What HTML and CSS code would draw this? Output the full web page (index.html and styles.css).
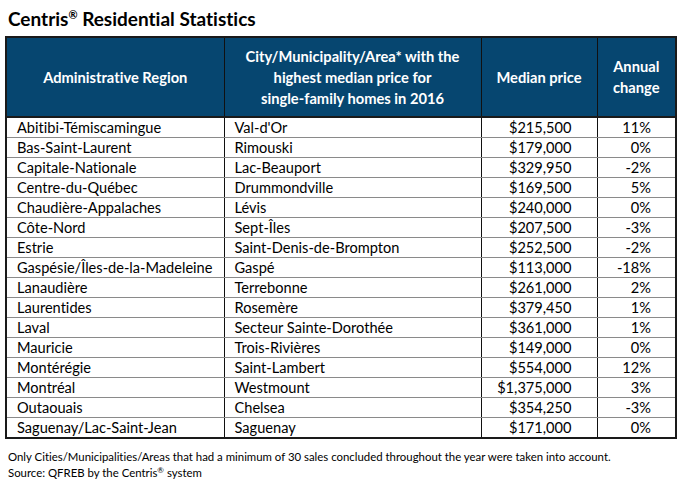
FILE: index.html
```html
<!DOCTYPE html>
<html>
<head>
<meta charset="utf-8">
<link rel="stylesheet" href="styles.css">
</head>
<body>
<div class="page">
  <h1 class="title">Centris<sup class="reg">®</sup> Residential Statistics</h1>
  <table class="stats">
    <colgroup>
      <col class="c1"><col class="c2"><col class="c3"><col class="c4">
    </colgroup>
    <thead>
      <tr>
        <th>Administrative Region</th>
        <th>City/Municipality/Area* with the<br>highest median price for<br>single-family homes in 2016</th>
        <th>Median price</th>
        <th>Annual<br>change</th>
      </tr>
    </thead>
    <tbody>
      <tr><td>Abitibi-Témiscamingue</td><td>Val-d'Or</td><td class="num">$215,500</td><td class="pct">11%</td></tr>
      <tr><td>Bas-Saint-Laurent</td><td>Rimouski</td><td class="num">$179,000</td><td class="pct">0%</td></tr>
      <tr><td>Capitale-Nationale</td><td>Lac-Beauport</td><td class="num">$329,950</td><td class="pct">-2%</td></tr>
      <tr><td>Centre-du-Québec</td><td>Drummondville</td><td class="num">$169,500</td><td class="pct">5%</td></tr>
      <tr><td>Chaudière-Appalaches</td><td>Lévis</td><td class="num">$240,000</td><td class="pct">0%</td></tr>
      <tr><td>Côte-Nord</td><td>Sept-Îles</td><td class="num">$207,500</td><td class="pct">-3%</td></tr>
      <tr><td>Estrie</td><td>Saint-Denis-de-Brompton</td><td class="num">$252,500</td><td class="pct">-2%</td></tr>
      <tr><td>Gaspésie/Îles-de-la-Madeleine</td><td>Gaspé</td><td class="num">$113,000</td><td class="pct">-18%</td></tr>
      <tr><td>Lanaudière</td><td>Terrebonne</td><td class="num">$261,000</td><td class="pct">2%</td></tr>
      <tr><td>Laurentides</td><td>Rosemère</td><td class="num">$379,450</td><td class="pct">1%</td></tr>
      <tr><td>Laval</td><td>Secteur Sainte-Dorothée</td><td class="num">$361,000</td><td class="pct">1%</td></tr>
      <tr><td>Mauricie</td><td>Trois-Rivières</td><td class="num">$149,000</td><td class="pct">0%</td></tr>
      <tr><td>Montérégie</td><td>Saint-Lambert</td><td class="num">$554,000</td><td class="pct">12%</td></tr>
      <tr><td>Montréal</td><td>Westmount</td><td class="num">$1,375,000</td><td class="pct">3%</td></tr>
      <tr><td>Outaouais</td><td>Chelsea</td><td class="num">$354,250</td><td class="pct">-3%</td></tr>
      <tr><td>Saguenay/Lac-Saint-Jean</td><td>Saguenay</td><td class="num">$171,000</td><td class="pct">0%</td></tr>
    </tbody>
  </table>
  <div class="notes">
    <p>Only Cities/Municipalities/Areas that had a minimum of 30 sales concluded throughout the year were taken into account.</p>
    <p>Source: QFREB by the Centris<sup class="reg-s">®</sup> system</p>
  </div>
</div>
</body>
</html>
```

FILE: styles.css
```css
html, body {
  margin: 0;
  padding: 0;
  background: #ffffff;
}
.page {
  font-family: Lato, "Noto Sans", sans-serif;
  font-variant-ligatures: none;
  color: #000;
  padding: 9px 0 0 5px;
  width: 670px;
}
.title {
  margin: 0 0 0 3px;
  font-size: 19px;
  line-height: 20px;
  font-weight: 700;
  height: 27px;
}
.reg {
  font-size: 11px;
  vertical-align: 7px;
  line-height: 0;
}
.stats {
  border-collapse: collapse;
  table-layout: fixed;
  width: 670px;
  border: 2px solid #1a1a1a;
}
.c1 { width: 218px; }
.c2 { width: 257px; }
.c3 { width: 116px; }
.c4 { width: 79px; }
.stats th {
  background: #064670;
  color: #fff;
  font-weight: 700;
  font-size: 14.7px;
  line-height: 21px;
  height: 80px;
  padding: 0 2px;
  border-left: 1px solid #111;
  border-right: 1px solid #111;
  border-bottom: 2px solid #1a1a1a;
  text-align: center;
  vertical-align: middle;
  box-sizing: border-box;
  white-space: nowrap;
}
.stats td {
  font-size: 14.6px;
  height: 20px;
  line-height: 19px;
  padding: 0 0 0 10px;
  border-left: 1px solid #111;
  border-right: 1px solid #111;
  border-bottom: 1px solid #8a8a8a;
  box-sizing: border-box;
  white-space: nowrap;
}
.stats td.num {
  text-align: right;
  padding: 0 25px 0 0;
}
.stats td.pct {
  text-align: right;
  padding: 0 24px 0 0;
}
.notes {
  margin: 10px 0 0 3px;
  font-size: 11.4px;
  line-height: 16px;
}
.notes p {
  margin: 0;
}
.reg-s {
  font-size: 8px;
  vertical-align: 4px;
  line-height: 0;
}
```
